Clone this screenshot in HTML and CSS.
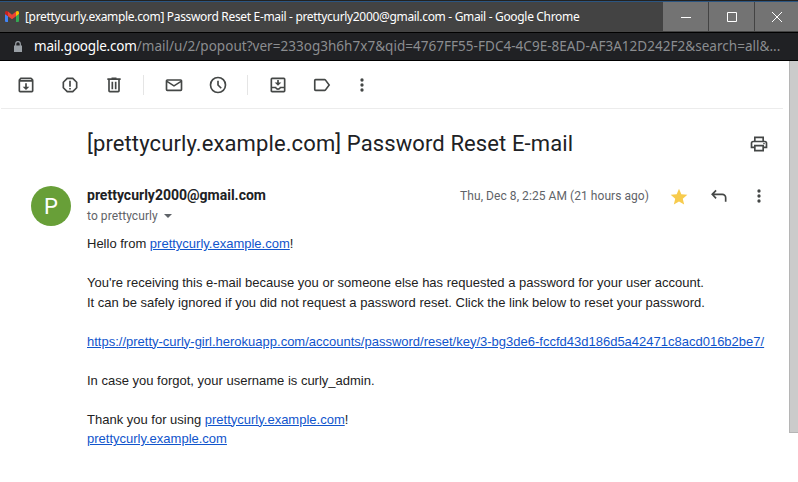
FILE: index.html
```html
<!DOCTYPE html>
<html lang="en">
<head>
<meta charset="utf-8">
<title>Password Reset E-mail</title>
<link rel="stylesheet" href="styles.css">
</head>
<body>
<header class="titlebar">
  <svg class="logo" viewBox="0 0 14 11"><path fill="#4285f4" d="M0 3l3 2v6H1a1 1 0 0 1-1-1z"/><path fill="#34a853" d="M14 3l-3 2v6h2a1 1 0 0 0 1-1z"/><path fill="#c5221f" d="M0 3V1.6C0 0 1.7-.4 3 .6V5.2z"/><path fill="#fbbc04" d="M14 3V1.6C14 0 12.300-.4 11 .6V5.2z"/><path fill="#ea4335" d="M3 .6l4 3.100L11 .6v4.600L7 8.200 3 5.200z"/></svg>
  <span class="caption">[prettycurly.example.com] Password Reset E-mail - prettycurly2000@gmail.com - Gmail - Google Chrome</span>
  <div class="controls">
    <span class="control"><svg viewBox="0 0 12 12"><path d="M1 6.500h10"/></svg></span>
    <span class="control"><svg viewBox="0 0 12 12"><path d="M1.500 1.500h9v9h-9z"/></svg></span>
    <span class="control"><svg viewBox="0 0 12 12"><path d="M1 1l10 10M11 1L1 11"/></svg></span>
  </div>
</header>
<div class="addressbar">
  <svg class="lock" viewBox="0 0 8 11"><path fill="#9aa0a6" d="M0 4.500h8V11H0z"/><path fill="none" stroke="#9aa0a6" stroke-width="1.200" d="M1.700 5V3a2.300 2.300 0 0 1 4.600 0v2"/></svg>
  <span class="url"><b>mail.google.com</b>/mail/u/2/popout?ver=233og3h6h7x7&amp;qid=4767FF55-FDC4-4C9E-8EAD-AF3A12D242F2&amp;search=all&amp;...</span>
</div>
<div class="page">
  <main class="content">
    <nav class="toolbar">
      <svg class="icon" viewBox="0 0 24 24"><path d="M20.540 5.230l-1.390-1.680A1.450 1.450 0 0 0 18 3H6c-.470 0-.880.210-1.160.550L3.460 5.230C3.170 5.570 3 6.020 3 6.500V19a2 2 0 0 0 2 2h14a2 2 0 0 0 2-2V6.500c0-.480-.170-.930-.460-1.270zM6.240 5h11.520l.830 1H5.420zM5 19V8h14v11zm8-9h-2v4H8l4 4 4-4h-3z"/></svg>
      <svg class="icon" viewBox="0 0 24 24"><path d="M15.730 3H8.270L3 8.270v7.460L8.270 21h7.460L21 15.730V8.270zM19 14.900L14.900 19H9.100L5 14.900V9.100L9.100 5h5.800L19 9.100zM11 7h2v7h-2zm0 8.500h2v2h-2z"/></svg>
      <svg class="icon" viewBox="0 0 24 24"><path d="M15 4V3H9v1H4v2h1v13a2 2 0 0 0 2 2h10a2 2 0 0 0 2-2V6h1V4zm2 15H7V6h10zM9 8h2v9H9zm4 0h2v9h-2z"/></svg>
      <i class="divider"></i>
      <svg class="icon" viewBox="0 0 24 24"><path d="M20 5H4a2 2 0 0 0-2 2v10.500a2 2 0 0 0 2 2h16a2 2 0 0 0 2-2V7a2 2 0 0 0-2-2zm0 2l-8 5-8-5zM4 17.500V9l8 5 8-5v8.500z"/></svg>
      <svg class="icon" viewBox="0 0 24 24"><path d="M12 2a10 10 0 1 0 0 20 10 10 0 0 0 0-20zm0 18a8 8 0 1 1 0-16 8 8 0 0 1 0 16zm1-13h-2v5.400l4.200 4.200 1.400-1.400-3.600-3.600z"/></svg>
      <i class="divider"></i>
      <svg class="icon" viewBox="0 0 24 24"><path d="M19 3H5a2 2 0 0 0-2 2v14c0 1.100.900 2 2 2h14a2 2 0 0 0 2-2V5a2 2 0 0 0-2-2zM5 19v-3h3.560a4 4 0 0 0 6.880 0H19v3zm0-5V5h14v9h-5a2 2 0 0 1-4 0zm11-5h-3V6h-2v3H8l4 4z"/></svg>
      <svg class="icon label" viewBox="0 0 24 24"><path d="M16.800 5.300A2.300 2.300 0 0 0 15.200 4.500H4.300a2 2 0 0 0-2 2v11a2 2 0 0 0 2 2h10.900c.670 0 1.270-.330 1.630-.840L21.800 12zM15.400 17.500H4.300v-11h11.100l4 5.500z"/></svg>
      <svg class="icon dots" viewBox="0 0 24 24"><circle cx="12" cy="6" r="2"/><circle cx="12" cy="12" r="2"/><circle cx="12" cy="18" r="2"/></svg>
    </nav>
    <div class="subject">
      <h1>[prettycurly.example.com] Password Reset E-mail</h1>
      <svg class="icon" viewBox="0 0 24 24"><path d="M19 8h-1V3H6v5H5a3 3 0 0 0-3 3v6h4v4h12v-4h4v-6a3 3 0 0 0-3-3zM8 5h8v3H8zm8 14H8v-4h8zm2-4v-2H6v2H4v-4a1 1 0 0 1 1-1h14a1 1 0 0 1 1 1v4z"/><circle cx="18" cy="11.500" r="1"/></svg>
    </div>
    <section class="message">
      <div class="avatar">P</div>
      <div class="sender">
        <strong>prettycurly2000@gmail.com</strong>
        <div class="to"><span>to prettycurly</span><i class="caret"></i></div>
      </div>
      <div class="meta">
        <time>Thu, Dec 8, 2:25 AM (21 hours ago)</time>
        <svg class="icon star" viewBox="0 0 24 24"><path d="M12 17.270L18.180 21l-1.640-7.030L22 9.240l-7.190-.610L12 2 9.190 8.630 2 9.240l5.460 4.730L5.820 21z"/></svg>
        <svg class="icon" viewBox="0 0 24 24"><path d="M7.800 4.500L9.200 5.900 6.300 9H16a5 5 0 0 1 5 5v5h-2v-5a3 3 0 0 0-3-3H6.300l2.900 3.100-1.400 1.400L2.500 10z"/></svg>
        <svg class="icon" viewBox="0 0 24 24"><circle cx="12" cy="6" r="2"/><circle cx="12" cy="12" r="2"/><circle cx="12" cy="18" r="2"/></svg>
      </div>
    </section>
    <article class="body">
      <p>Hello from <a>prettycurly.example.com</a>!</p>
      <p>You're receiving this e-mail because you or someone else has requested a password for your user account.<br>It can be safely ignored if you did not request a password reset. Click the link below to reset your password.</p>
      <p><a>https://pretty-curly-girl.herokuapp.com/accounts/password/reset/key/3-bg3de6-fccfd43d186d5a42471c8acd016b2be7/</a></p>
      <p>In case you forgot, your username is curly_admin.</p>
      <p>Thank you for using <a>prettycurly.example.com</a>!<br><a>prettycurly.example.com</a></p>
    </article>
  </main>
  <div class="scrollbar"></div>
</div>
</body>
</html>
```
FILE: styles.css
```css
* { box-sizing: border-box; }
body { margin: 0; width: 798px; height: 482px; overflow: hidden; background: #fff; font-family: Roboto, sans-serif; color: #202124; }
svg { display: block; flex: none; }

.titlebar { display: flex; align-items: center; height: 33px; padding-left: 5px; background: #434343; border-top: 1px solid #222; border-bottom: 1px solid #000; box-shadow: inset 0 1px #2b5581; }
.logo { width: 14px; height: 11px; }
.caption { flex: 1; margin-left: 6px; font: 12px/16px "Noto Sans", sans-serif; letter-spacing: -0.325px; color: #fff; white-space: nowrap; }
.controls { display: flex; flex: none; gap: 1px; height: 29px; }
.control { display: flex; align-items: center; justify-content: center; width: 45px; background: #737373; }
.control:last-child { width: 43px; padding-left: 1px; }
.control svg { width: 12px; height: 12px; fill: none; stroke: #fff; }

.addressbar { display: flex; align-items: center; height: 28px; padding-left: 14px; background: #202124; border-bottom: 1px solid #000; }
.lock { width: 8px; height: 11px; margin-bottom: 1px; }
.url { margin: 0 0 2px 12px; font: 13.500px/20px "Noto Sans", sans-serif; letter-spacing: .03px; color: #8b8d90; white-space: nowrap; }
.url b { font-weight: 400; letter-spacing: -.2px; color: #fff; }

.page { display: flex; align-items: flex-start; justify-content: space-between; }
.content { width: 784px; }
.scrollbar { width: 9px; height: 372px; background: #cbcbcb; border-left: 1px solid #b5b5b5; border-bottom: 1px solid #b5b5b5; }

.icon { width: 20px; height: 20px; fill: #444746; }
.toolbar { display: flex; align-items: center; height: 48px; margin: 0 1px; padding-left: 15px; border-bottom: 1px solid #ececec; gap: 24px; }
.divider { width: 1px; height: 20px; margin: 0 -4px 0 -5px; background: #e5e5e5; }
.toolbar .dots { margin-left: -4px; }

.subject { display: flex; justify-content: space-between; align-items: center; height: 70px; padding: 0 15px 0 87px; }
h1 { margin: 0; font-size: 22px; line-height: 28px; font-weight: 400; letter-spacing: .11px; white-space: nowrap; }

.message { display: flex; height: 55px; padding: 7px 15px 0 31px; }
.avatar { width: 40px; height: 40px; border-radius: 50%; background: #689f38; color: #fff; font-size: 22px; line-height: 41px; text-align: center; }
.sender { flex: 1; margin-left: 16px; }
.sender strong { display: block; font-size: 14px; line-height: 18px; }
.to { display: flex; align-items: center; gap: 6px; font-size: 12px; line-height: 20px; margin-top: 2px; color: #5f6368; letter-spacing: .08px; }
.caret { border: 4px solid transparent; border-top-color: #5f6368; border-bottom: 0; }
.meta { display: flex; gap: 20px; height: 20px; align-items: center; }
time { font-size: 12px; line-height: 20px; color: #5f6368; letter-spacing: .06px; white-space: nowrap; }
.star { fill: #f7cb4d; margin-top: 2px; }

.body { padding-left: 87px; font: 13px/19.500px "Liberation Sans", Arial, sans-serif; color: #222; white-space: nowrap; }
.body p { margin: 0 0 19.500px; }
.body a { color: #15c; text-decoration: underline; }
```
